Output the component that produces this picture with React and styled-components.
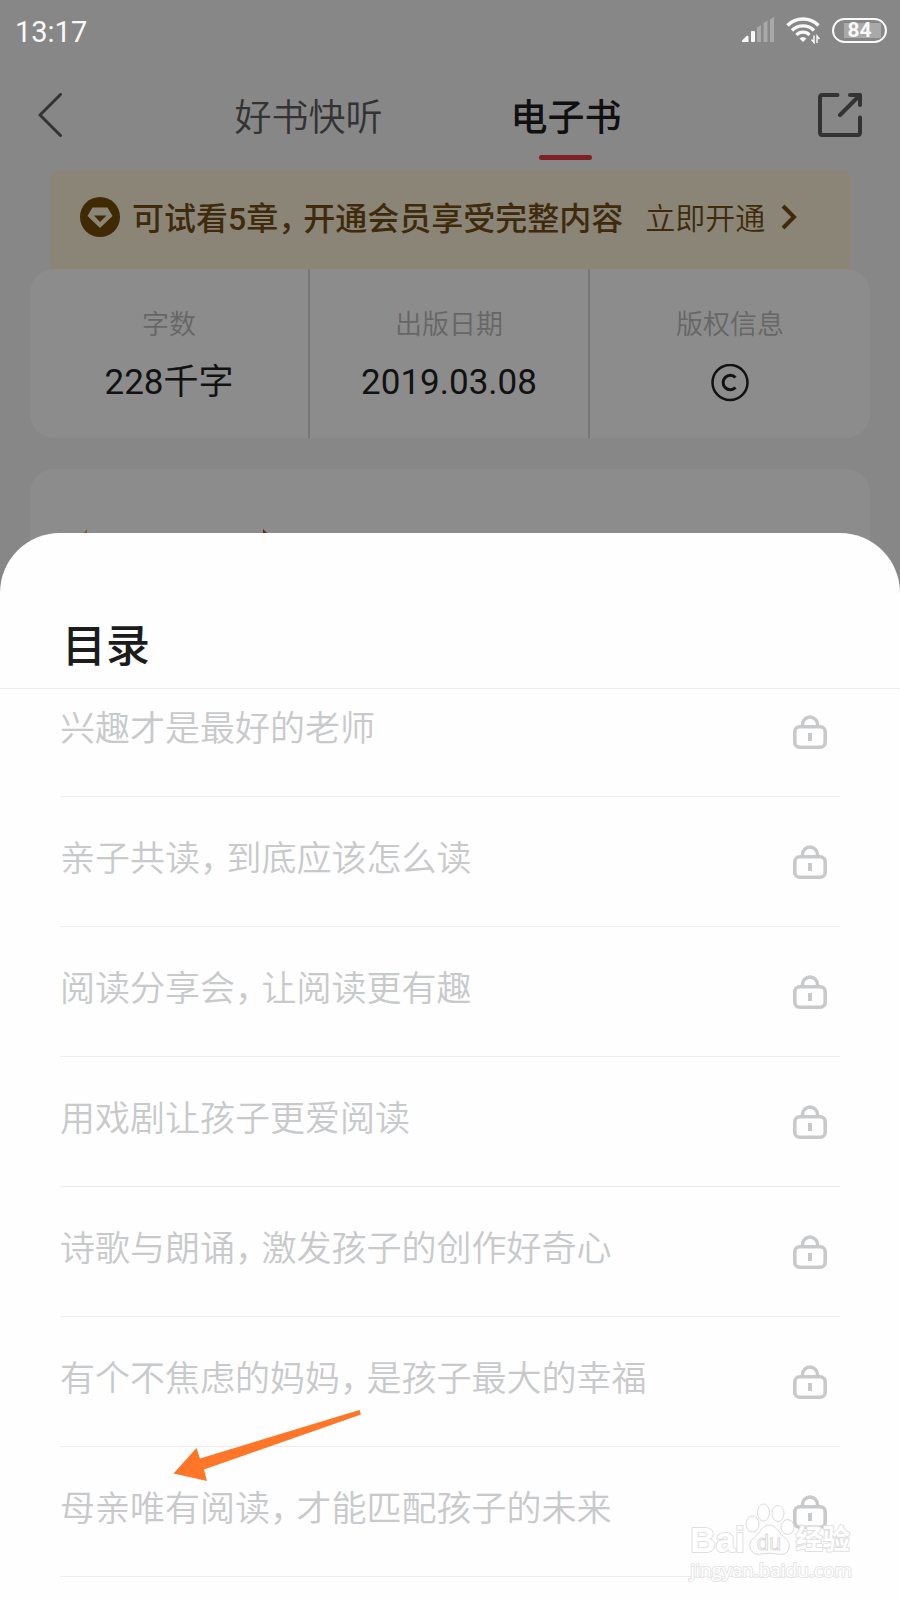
import React from 'react';
import styled, { createGlobalStyle } from 'styled-components';

const GlobalStyle = createGlobalStyle`
  *, *::before, *::after {
    box-sizing: border-box;
  }

  body {
    margin: 0;
    background: #878787;
    font-family: Roboto, 'Noto Sans CJK SC', sans-serif;
  }

  button {
    padding: 0;
    border: none;
    background: none;
    font: inherit;
    color: inherit;
    cursor: pointer;
  }

  svg {
    display: block;
    flex: none;
  }
`;

// --- Styled Components ---

const Page = styled.div`
  position: relative;
  display: flex;
  flex-direction: column;
  min-height: 100vh;
  overflow: hidden;
  background: #878787;
`;

/* Status bar */
const StatusBar = styled.div`
  display: flex;
  align-items: center;
  justify-content: space-between;
  height: 60px;
  padding: 0 13px 0 15px;
  color: #f8f8f8;
`;

const Clock = styled.time`
  padding-top: 4px;
  font-size: 29px;
  line-height: 56px;
`;

const StatusIcons = styled.div`
  display: flex;
  align-items: center;
  gap: 12px;
`;

const Battery = styled.span`
  display: flex;
  align-items: center;
  justify-content: center;
  width: 55px;
  height: 25px;
  border: 2px solid #f8f8f8;
  border-radius: 13px;
  background: linear-gradient(#a9a9a9, #a9a9a9) 10px 3px / 37px 15px no-repeat;
  font-size: 21px;
  font-weight: 700;
  line-height: 20px;
`;

/* Navigation */
const NavBar = styled.header`
  display: flex;
  align-items: center;
  justify-content: space-between;
  height: 110px;
  padding: 0 38px;
  color: #333333;
`;

const Tabs = styled.nav`
  display: flex;
  flex: 1;
  justify-content: center;
  gap: 128px;
  height: 100%;
  padding-right: 24px;
`;

const Tab = styled.button`
  position: relative;
  height: 110px;
  font-size: 37px;
  font-weight: ${({ $active }) => ($active ? 500 : 350)};
  color: ${({ $active }) => ($active ? '#101010' : '#333333')};

  &::after {
    content: '';
    display: ${({ $active }) => ($active ? 'block' : 'none')};
    position: absolute;
    left: 50%;
    bottom: 10px;
    width: 53px;
    height: 5px;
    margin-left: -27px;
    border-radius: 3px;
    background: #821f22;
  }
`;

/* Membership banner */
const Banner = styled.section`
  display: flex;
  align-items: center;
  height: 99px;
  margin: 0 50px;
  padding: 0 30px 6px;
  border-radius: 8px 8px 0 0;
  background: #8a8577;
  color: #3f2a0b;
`;

const BannerText = styled.p`
  margin: 0 22px 0 12px;
  padding-top: 4px;
  font-size: 32px;
  font-weight: 500;
  line-height: 48px;
  white-space: nowrap;
`;

const BannerLink = styled.a`
  display: flex;
  align-items: center;
  gap: 16px;
  color: inherit;
  font-size: 30px;
  font-weight: 350;
  line-height: 48px;
  text-decoration: none;
  white-space: nowrap;
`;

const BannerLinkText = styled.span`
  padding-top: 4px;
`;

/* Cards */
const Card = styled.section`
  margin: 0 30px;
  border-radius: 24px;
  background: #8c8c8c;
`;

const StatsCard = styled(Card)`
  display: grid;
  grid-template-columns: repeat(3, 1fr);
  height: 169px;
`;

const Stat = styled.div`
  display: flex;
  flex-direction: column;
  align-items: center;
  gap: 16px;
  padding-top: 36px;

  &:not(:last-child) {
    border-right: 2px solid #777777;
  }
`;

const StatLabel = styled.span`
  font-size: 27px;
  font-weight: 350;
  line-height: 40px;
  color: #666666;
`;

const StatValue = styled.span`
  display: flex;
  align-items: center;
  height: 44px;
  font-size: 35px;
  line-height: 44px;
  color: #121212;
`;

const IntroCard = styled(Card)`
  height: 124px;
  margin-top: 31px;
  padding: 60px 52px 0;
`;

/* Bottom sheet */
const Sheet = styled.main`
  position: relative;
  flex: 1;
  margin-top: -60px;
  padding-bottom: 23px;
  border-radius: 60px 60px 0 0;
  background: #fefefe;
`;

const SheetTitle = styled.h1`
  height: 156px;
  margin: 0;
  padding: 81px 62px 0;
  border-bottom: 1px solid #ededed;
  font-size: 44px;
  font-weight: 500;
  line-height: 66px;
  color: #1c1c1c;
`;

const ScrollArea = styled.div`
  overflow: hidden;
`;

/* The list is scrolled a little way under the title */
const ChapterList = styled.ul`
  margin: -22px 60px 0;
  padding: 0;
  list-style: none;
`;

const ChapterItem = styled.li`
  border-bottom: 1px solid #ededed;
`;

const ChapterButton = styled.button`
  display: flex;
  align-items: center;
  justify-content: space-between;
  width: 100%;
  height: 129px;
  padding-right: 13px;
  color: #c8c9cb;
  text-align: left;
`;

const ChapterName = styled.span`
  padding-bottom: 4px;
  font-size: 35px;
  font-weight: 350;
  line-height: 52px;
`;

/* Half-width comma with a little air after it */
const Comma = styled.span`
  margin-right: 9px;
  font-feature-settings: 'halt';
`;

const Arrow = styled.svg`
  position: absolute;
  top: 876px;
  left: 173px;
`;

/* Watermark */
const Watermark = styled.div`
  position: absolute;
  right: 48px;
  bottom: 17px;
  font-family: 'Liberation Sans', 'Noto Sans CJK SC', sans-serif;
  color: #ffffff;
  -webkit-text-stroke: 2px #e0e0e0;
  paint-order: stroke fill;
  pointer-events: none;
`;

const WatermarkLogo = styled.div`
  display: flex;
  align-items: flex-end;
  height: 54px;
  font-size: 35px;
  font-weight: 700;
  line-height: 34px;
`;

const WatermarkName = styled.span`
  margin-left: 1px;
  font-size: 27px;
`;

const WatermarkSite = styled.div`
  font-family: 'Open Sans', sans-serif;
  font-size: 19px;
  line-height: 26px;
  -webkit-text-stroke-color: #e4e4e4;
`;

// --- Icons ---

const SignalIcon = () => (
  <svg width="32" height="26" viewBox="0 0 32 26" fill="#f8f8f8" aria-hidden="true">
    <path d="M0 25v-1.500l4.500-4.500q2-1 2 1v5z" />
    <rect x="9" y="14" width="4" height="11" rx="1" />
    <path d="M15 10.500l4-2.500v17h-4zM21.500 6l4-2.500v21.500h-4zM28 2.500l4-2.500v25h-4z" opacity="0.3" />
  </svg>
);

const WifiIcon = () => (
  <svg width="34" height="28" viewBox="0 0 34 28" fill="none" stroke="#f8f8f8" aria-hidden="true">
    <path d="M1.500 9.500a22 22 0 0 1 31 0" strokeWidth="3.500" />
    <path d="M6 14.500a15.500 15.500 0 0 1 22 0" strokeWidth="3.400" />
    <path d="M10.500 19a9 9 0 0 1 13 0" strokeWidth="3.200" />
    <path d="M13.500 22.500q3.500-3 7 0l-3.500 3.500z" fill="#f8f8f8" stroke="none" />
    <path d="M28 19.500v7l-2.500-3M31 27v-7l2.500 3" strokeWidth="1.500" />
  </svg>
);

const BackIcon = () => (
  <svg width="24" height="44" viewBox="0 0 24 44" fill="none" stroke="currentColor" strokeWidth="3" strokeLinecap="round" strokeLinejoin="round" aria-hidden="true">
    <path d="M22.500 1.500L2 22l20.500 20.500" />
  </svg>
);

const ShareIcon = () => (
  <svg width="44" height="44" viewBox="0 0 44 44" fill="none" stroke="currentColor" strokeWidth="4" strokeLinecap="round" strokeLinejoin="round" aria-hidden="true">
    <path d="M19.500 2H4.500Q2 2 2 4.500v35Q2 42 4.500 42h35q2.500 0 2.500-2.500V24.500" />
    <path d="M32 2h10v10M42 2L22 22" />
  </svg>
);

const DiamondIcon = () => (
  <svg width="40" height="40" viewBox="0 0 40 40" aria-hidden="true">
    <circle cx="20" cy="20" r="20" fill="#402a04" />
    <path d="M12.500 10.500h15L32.500 19 20 31 7.500 19z" fill="#8a8577" />
    <path d="M14 18.500h12.500L20 25z" fill="#402a04" />
  </svg>
);

const ChevronIcon = () => (
  <svg width="16" height="26" viewBox="0 0 16 26" fill="none" stroke="currentColor" strokeWidth="4" aria-hidden="true">
    <path d="M2 2l11 11L2 24" />
  </svg>
);

const CopyrightIcon = () => (
  <svg width="38" height="38" viewBox="0 0 38 38" fill="none" stroke="currentColor" role="img" aria-label="版权">
    <circle cx="19" cy="18.500" r="17.500" strokeWidth="2.500" />
    <path d="M24.500 13.500a7.200 7.200 0 1 0 0 10" strokeWidth="3" />
  </svg>
);

const CoverTips = () => (
  <svg width="190" height="8" viewBox="0 0 190 8" aria-hidden="true">
    <path d="M1 5L5 0v5z" fill="#8f5620" />
    <path d="M181 0l5 5h-5z" fill="#702020" />
  </svg>
);

const LockIcon = () => (
  <svg width="34" height="34" viewBox="0 0 34 34" fill="none" stroke="currentColor" aria-hidden="true">
    <rect x="1.800" y="11.800" width="30.400" height="20.400" rx="5" strokeWidth="3.600" />
    <path d="M9.500 11V9.500a7.500 7.500 0 0 1 15 0V11" strokeWidth="3.400" />
    <path d="M17 18v8" strokeWidth="4" />
  </svg>
);

const PawIcon = () => (
  <svg width="50" height="54" viewBox="0 0 50 54" fill="#ffffff" stroke="#dadada" paintOrder="normal" aria-hidden="true">
    <ellipse cx="7.500" cy="21" rx="6.500" ry="8" />
    <ellipse cx="18.500" cy="9.500" rx="6" ry="8.500" />
    <ellipse cx="33" cy="10.500" rx="6" ry="8" />
    <ellipse cx="42.500" cy="24" rx="6.500" ry="7.500" />
    <path d="M24 22c6 0 9 6 13 10s8 6 7 13c-1 6-7 7-12 6s-11-1-16 0S6 50 5 44s3-8 7-12 6-10 12-10z" />
    <text x="24" y="47" textAnchor="middle" fontSize="22" fontWeight="400" strokeWidth="1">du</text>
  </svg>
);

// --- Data ---

const STATS = [
  { label: '字数', value: '228千字' },
  { label: '出版日期', value: '2019.03.08' },
  { label: '版权信息', value: <CopyrightIcon /> },
];

const CHAPTERS = [
  '兴趣才是最好的老师',
  '亲子共读，到底应该怎么读',
  '阅读分享会，让阅读更有趣',
  '用戏剧让孩子更爱阅读',
  '诗歌与朗诵，激发孩子的创作好奇心',
  '有个不焦虑的妈妈，是孩子最大的幸福',
  '母亲唯有阅读，才能匹配孩子的未来',
];

const withCommas = (text) =>
  text.split('，').map((part, i) => (
    <React.Fragment key={part}>
      {i > 0 && <Comma>，</Comma>}
      {part}
    </React.Fragment>
  ));

// --- Component Assembly ---

export default function App() {
  return (
    <Page lang="zh-CN">
      <GlobalStyle />

      <StatusBar>
        <Clock>13:17</Clock>
        <StatusIcons>
          <SignalIcon />
          <WifiIcon />
          <Battery>84</Battery>
        </StatusIcons>
      </StatusBar>

      <NavBar>
        <button type="button" aria-label="返回"><BackIcon /></button>
        <Tabs>
          <Tab type="button">好书快听</Tab>
          <Tab type="button" $active>电子书</Tab>
        </Tabs>
        <button type="button" aria-label="分享"><ShareIcon /></button>
      </NavBar>

      <Banner>
        <DiamondIcon />
        <BannerText>{withCommas('可试看5章，开通会员享受完整内容')}</BannerText>
        <BannerLink href="#vip">
          <BannerLinkText>立即开通</BannerLinkText>
          <ChevronIcon />
        </BannerLink>
      </Banner>

      <StatsCard>
        {STATS.map(({ label, value }) => (
          <Stat key={label}>
            <StatLabel>{label}</StatLabel>
            <StatValue>{value}</StatValue>
          </Stat>
        ))}
      </StatsCard>

      <IntroCard>
        <CoverTips />
      </IntroCard>

      <Sheet>
        <SheetTitle>目录</SheetTitle>
        <ScrollArea>
          <ChapterList>
            {CHAPTERS.map((name) => (
              <ChapterItem key={name}>
                <ChapterButton type="button">
                  <ChapterName>{withCommas(name)}</ChapterName>
                  <LockIcon />
                </ChapterButton>
              </ChapterItem>
            ))}
          </ChapterList>
        </ScrollArea>

        <Arrow width="189" height="73" viewBox="0 0 189 73" fill="#ff7628" aria-hidden="true">
          <path d="M0.500 64.500L23.500 39l3.500 10.500L186.500 1l1.500 4.500L31 60.500 34 72z" />
        </Arrow>

        <Watermark>
          <WatermarkLogo>
            Bai
            <PawIcon />
            <WatermarkName>经验</WatermarkName>
          </WatermarkLogo>
          <WatermarkSite>jingyan.baidu.com</WatermarkSite>
        </Watermark>
      </Sheet>
    </Page>
  );
}
